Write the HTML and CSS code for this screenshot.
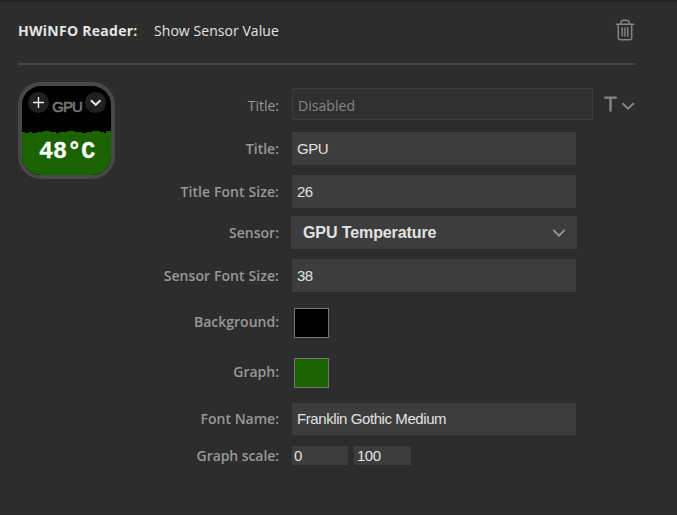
FILE: index.html
```html
<!DOCTYPE html>
<html lang="en">
<head>
<meta charset="utf-8">
<title>HWiNFO Reader</title>
<link rel="stylesheet" href="styles.css">
</head>
<body>
<main class="inspector">
  <header class="header">
    <h1 class="plugin">HWiNFO Reader:</h1>
    <span class="action">Show Sensor Value</span>
    <svg class="trash" width="20" height="22" viewBox="0 0 20 22" fill="none" stroke="#858585" stroke-width="1.4">
      <path d="M.8 5.2h18.4M5.6 5C5.8 2.6 7 1.3 8.5 1.3h3C13 1.3 14.2 2.6 14.4 5M3.3 5.2v13.6q0 2 2 2h9.4q2 0 2-2V5.2"/>
      <path d="M7.2 8.2v9.2M10 8.2v9.2M12.8 8.2v9.2"/>
    </svg>
  </header>
  <div class="content">
    <div class="key">
      <div class="key-top">
        <span class="badge"><svg width="20" height="20" viewBox="0 0 20 20" fill="none" stroke="#eee" stroke-width="1.4"><path d="M10.5 5v11M5 10.5h11"/></svg></span>
        <span class="key-title">GPU</span>
        <span class="badge"><svg width="20" height="20" viewBox="0 0 20 20" fill="none" stroke="#e4e4e4" stroke-width="2"><path d="M5.9 8.2 10.7 12.8l4.8-4.6"/></svg></span>
      </div>
      <svg class="graph" width="91" height="44" viewBox="0 0 91 44" fill="#1a6300"><path d="M0 1h3v1h4V1h3v1h5V1h6V0h7v1h6v1h3V1h8V0h8v1h7v1h5V1h5V0h8v1h4v1h2V0h7v45H0z"/></svg>
      <span class="key-value">48°C</span>
    </div>
    <form class="form">
      <div class="row title-row"><label class="light">Title:</label><div class="field disabled">Disabled</div>
        <svg class="type" width="31" height="17" viewBox="0 0 31 17" fill="none" stroke="#858585" stroke-width="2"><path stroke-width="2.4" d="M.3 1.6h12.4M6.5 1.6v14"/><path d="m18.5 7.2 5.6 5.4 5.6-5.4"/></svg>
      </div>
      <div class="row"><label>Title:</label><div class="field">GPU</div></div>
      <div class="row r-size"><label class="wide">Title Font Size:</label><div class="field number">26</div></div>
      <div class="row r-select"><label>Sensor:</label><div class="select">GPU Temperature<svg width="14" height="10" viewBox="0 0 14 10" fill="none" stroke="#999" stroke-width="1.7"><path d="m1.3 1.8 5.7 5.9 5.7-5.9"/></svg></div></div>
      <div class="row r-sfs"><label class="wide">Sensor Font Size:</label><div class="field number">38</div></div>
      <div class="row r-bg"><label class="raised">Background:</label><div class="swatch black"></div></div>
      <div class="row r-graph"><label class="raised">Graph:</label><div class="swatch green"></div></div>
      <div class="row r-font"><label>Font Name:</label><div class="field">Franklin Gothic Medium</div></div>
      <div class="row r-scale"><label class="narrow">Graph scale:</label><div class="small">0</div><div class="small max">100</div></div>
    </form>
  </div>
</main>
</body>
</html>
```
FILE: styles.css
```css
* { box-sizing: border-box; }
body { margin: 0; background: #2d2d2d; font-family: "Open Sans", "Noto Sans", sans-serif; }
.inspector { height: 515px; border-top: 2px solid #222; border-bottom: 1px solid #282828; padding: 0 18px; overflow: hidden; }
.header { display: flex; align-items: center; width: 618px; height: 63px; padding-bottom: 5px; border-bottom: 2px solid #444; color: #e4e4e4; font-size: 14px; white-space: nowrap; }
.plugin { margin: 0; width: 136px; font-size: 14px; font-weight: 700; letter-spacing: .27px; }
.action { letter-spacing: .06px; }
.trash { margin: 0 1px 0 auto; }
.content { display: flex; }
.key { position: relative; flex: none; width: 97px; height: 97px; margin-top: 17px; border: 4px solid #484848; border-radius: 23px; background: #000; overflow: hidden; }
.key-top { display: flex; align-items: center; padding: 6px 5px 0 6px; justify-content: space-between; }
.badge { width: 21px; height: 21px; border-radius: 50%; background: #202020; }
.badge svg { display: block; }
.key-title { position: relative; top: 4px; font: 15px/18px "Liberation Sans", sans-serif; color: #777; -webkit-text-stroke: .6px #777; letter-spacing: -1px; }
.graph { position: absolute; left: 0; bottom: 0; }
.key-value { position: absolute; left: 17px; top: 52px; color: #fff; font: bold 23.5px/28px "Liberation Mono", monospace; -webkit-text-stroke: .3px #fff; }
.form { width: 521px; margin-top: 23px; }
.row { display: flex; align-items: center; height: 33px; margin-top: 12px; }
label { width: 164px; margin-right: 13px; flex: none; text-align: right; font-size: 14px; font-weight: 600; line-height: 20px; color: #989898; white-space: nowrap; }
label.light { padding-top: 3px; font-weight: 400; }
label.wide { letter-spacing: .08px; }
label.narrow { letter-spacing: -.07px; }
label.raised { padding-bottom: 2px; }
.field { width: 284px; height: 33px; padding-left: 5px; background: #3d3d3d; color: #e2e2e2; font: 15px/33px "Liberation Sans", sans-serif; letter-spacing: -.42px; white-space: nowrap; }
.field.number { letter-spacing: -.7px; }
.title-row { height: 32px; margin-top: 0; }
.field.disabled { width: 301px; height: 32px; border: 1px solid #3d3d3d; background: #303030; color: #858585; font: 14px/32px "Open Sans", sans-serif; letter-spacing: .05px; padding-top: 1px; }
.type { margin-left: 11px; flex: none; }
.r-size { margin-top: 10px; }
.r-select { margin-top: 8px; }
.select { display: flex; align-items: center; justify-content: space-between; width: 286px; height: 33px; margin-left: -1px; padding: 0 11px 0 12px; background: #3d3d3d; color: #e2e2e2; font: bold 16px/33px "Liberation Sans", sans-serif; letter-spacing: -.1px; }
.r-sfs { margin-top: 10px; }
.r-bg { height: 30px; margin-top: 16px; }
.r-graph { height: 30px; margin-top: 20px; }
.swatch { width: 35px; height: 30px; margin-left: 2px; border: 1px solid #767676; }
.black { background: #000; }
.green { background: #1a6300; }
.r-font { height: 32px; margin-top: 15px; }
.r-font .field { height: 32px; line-height: 32px; }
.r-scale { height: 19px; margin-top: 11px; }
.small { width: 56px; height: 19px; padding-left: 2px; background: #3d3d3d; color: #e2e2e2; font: 15px/20px "Liberation Sans", sans-serif; letter-spacing: -.5px; }
.max { width: 57px; margin-left: 6px; padding-left: 3px; }
```
